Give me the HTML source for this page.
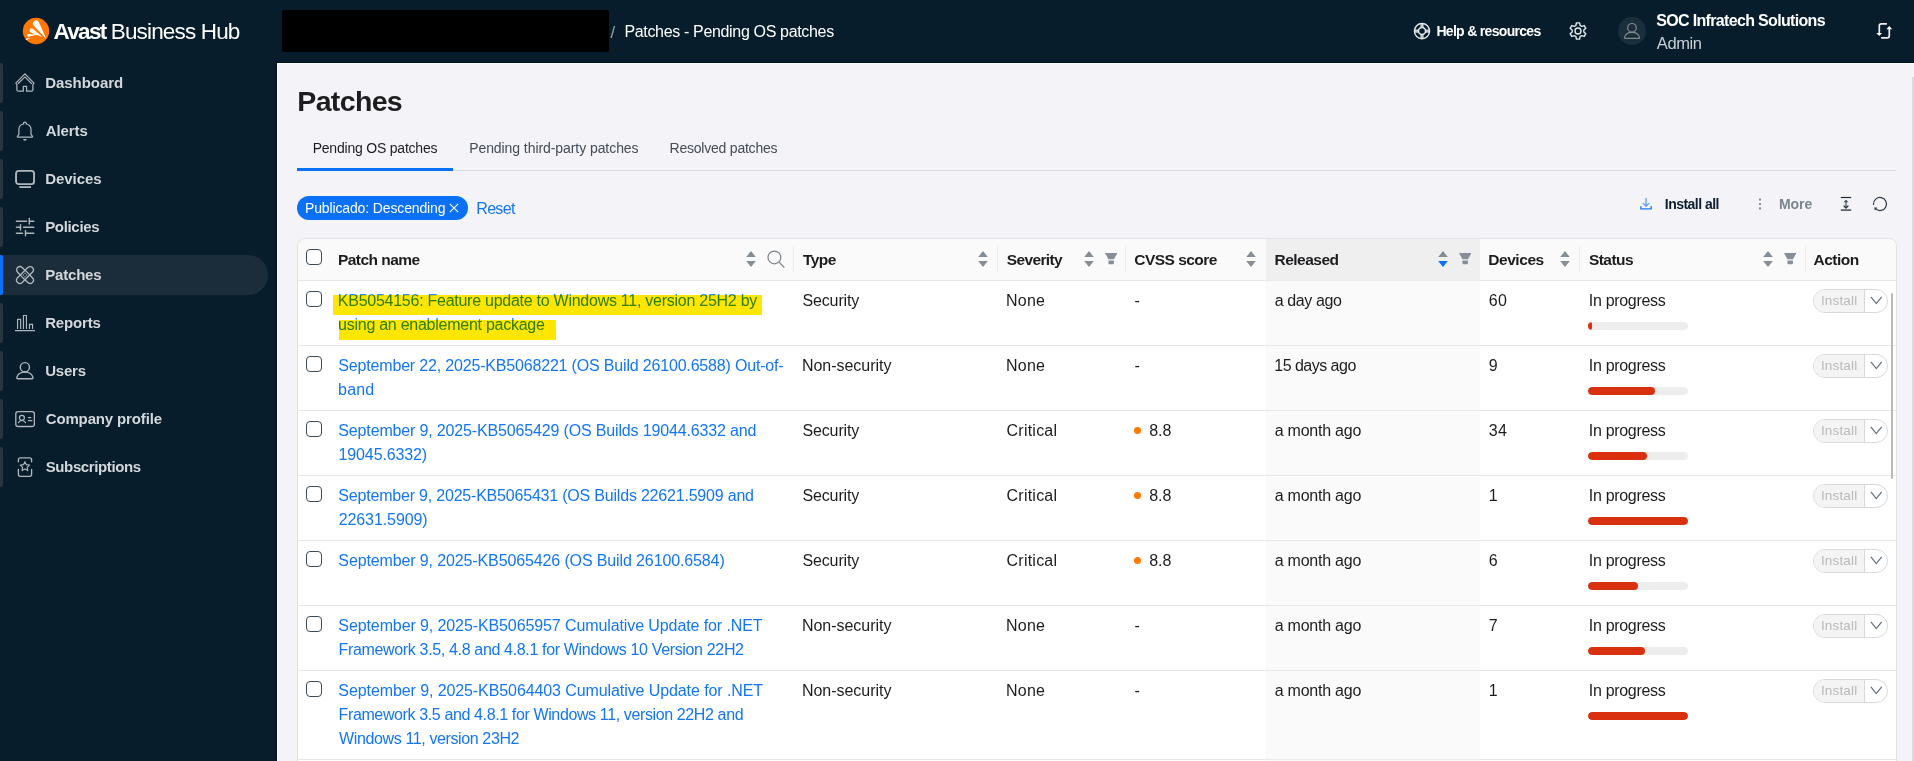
<!DOCTYPE html>
<html>
<head>
<meta charset="utf-8">
<title>Patches - Pending OS patches</title>
<style>
*{box-sizing:border-box;margin:0;padding:0}
html,body{width:1914px;height:761px;overflow:hidden;background:#f4f3f8;font-family:"Liberation Sans",sans-serif;color:#1d1d1f}
body{position:relative}
.a{position:absolute;white-space:nowrap}
#top{position:absolute;left:0;top:0;width:1914px;height:63px;background:#071d2b}
#side{position:absolute;left:0;top:63px;width:277px;height:698px;background:#071d2b}
.nav{position:absolute;left:0;width:277px;height:40px}
.nav .bar{position:absolute;left:0;top:0;width:3px;height:40px;background:#26363f;border-radius:0 2px 2px 0}
.nav .lbl{position:absolute;left:45.500px;top:11.100px;line-height:18px;color:#d3d7db;white-space:nowrap}
.nav svg{position:absolute;left:15px;top:10px;width:20px;height:20px;fill:none;stroke:#aeb6bc;stroke-width:1.300;stroke-linecap:round;stroke-linejoin:round}
.nav.act .pill{position:absolute;left:0;top:0;width:268px;height:40px;background:#1b2d3a;border-radius:0 20px 20px 0}
.nav.act .bar{background:#0a72f8}
#tbl{position:absolute;left:297px;top:238px;width:1600px;height:540px;background:#fff;border:1px solid #e1e1e7;border-radius:8px 8px 0 0;overflow:hidden}
#thead{position:absolute;left:0;top:0;width:1598px;height:42px;background:#fafafa;border-bottom:1px solid #e8e8ec}
#relcol{position:absolute;left:968px;top:0;width:214px;height:540px;background:#fafafa}
#relhead{position:absolute;left:968px;top:0;width:214px;height:41px;background:#efeff0}
.th{position:absolute;top:12px;line-height:18px;color:#1d1d1f;white-space:nowrap}
.sep{position:absolute;top:7px;width:1px;height:27px;background:#ececf0}
.row{position:absolute;left:0;width:1598px;border-bottom:1px solid #e8e8ec}
.cb{position:absolute;left:8px;width:16px;height:16px;border:1.500px solid #3c4b57;border-radius:4px;background:#fff}
.c{position:absolute;top:7.700px;line-height:24px;color:#1d1d1f;white-space:nowrap}
.nm{position:absolute;left:40.600px;line-height:24px;color:#1476f6;white-space:nowrap}
.dot{position:absolute;left:836px;top:15.500px;width:7.400px;height:7.400px;border-radius:4px;background:#ff7a00}
.trk{position:absolute;left:1290px;top:41px;width:100px;height:8px;border-radius:4px;background:#ededee;overflow:hidden}
.trk i{display:block;height:8px;border-radius:4px;background:#d9310f}
.btn{position:absolute;left:1515.200px;top:8.300px;width:74.600px;height:23.400px;border:1px solid #d6d9dc;border-radius:12px;background:#fff;overflow:hidden}
.btn .l{position:absolute;left:0;top:0;width:50.800px;height:22px;background:#f4f4f4;border-right:1px solid #d6d9dc}
.btn .t{position:absolute;left:7.300px;top:-0.500px;line-height:21px;color:#b9b9bc;white-space:nowrap}
.btn svg{position:absolute;left:55.600px;top:5.900px;width:12.600px;height:9px;fill:none;stroke:#66737f;stroke-width:1.250}
.hl{position:absolute;background:#ffe600;mix-blend-mode:multiply}
</style>
</head>
<body>
<div id="top"></div><div id="side"></div>
<div class="a" style="left:276px;top:62px;width:1638px;height:700px;border-left:1px solid #03121d;border-top:1px solid #03121d"></div>
<div class="a" style="left:277px;top:63px;width:1637px;height:700px;border-left:1px solid #fcfcfe;border-top:1px solid #fcfcfe"></div>
<svg class="a" style="left:22px;top:17px" width="28" height="28" viewBox="0 0 28 28"><circle cx="14" cy="14" r="13.2" fill="#ff7800"/><path fill="#fff" d="M24.4 21.9L16.77 4.97A3.1 3.1 0 1 0 11.63 8.43ZM20.5 19.9L10.92 11.7A2.2 2.2 0 1 0 8.68 15.5ZM15.5 17.6L6.49 16.95A1.35 1.35 0 1 0 6.71 19.65ZM8.4 20.7L4.14 21.65A0.7 0.7 0 1 0 4.66 22.95Z"/></svg>
<div class="a" style="left:53.500px;top:18.900px;line-height:26px;color:#fff;font-size:22.5px;font-weight:700;letter-spacing:-1.688px;left:53.50px">Avast</div>
<div class="a" style="left:112px;top:18.900px;line-height:26px;color:#fff;font-size:22.5px;font-weight:400;letter-spacing:-0.841px;left:110.75px">Business Hub</div>
<div class="a" style="left:282px;top:10px;width:327px;height:41.700px;background:#000;border-radius:2px"></div>
<div class="a" style="left:610.500px;top:22px;font-size:16.500px;line-height:20px;color:#9aa5ad">/</div>
<div class="a" style="left:625.200px;top:22px;line-height:20px;color:#fff;font-size:16px;font-weight:400;letter-spacing:-0.337px;left:624.45px">Patches - Pending OS patches</div>
<svg class="a" style="left:1413px;top:22px" width="18" height="18" viewBox="0 0 18 18" fill="none">
<path d="M9 1.900V5.400M9 12.800V16.300M1.900 9.100H5.400M12.600 9.100H16.100" stroke="#c3c9cd" stroke-width="3.200"/>
<circle cx="9" cy="9.100" r="7.600" stroke="#e4e7e9" stroke-width="1.400"/><circle cx="9" cy="9.100" r="3.500" stroke="#e4e7e9" stroke-width="1.500"/></svg>
<div class="a" style="left:1436.900px;top:21.700px;line-height:18px;color:#fff;font-size:14px;font-weight:700;letter-spacing:-0.687px;left:1436.40px">Help &amp; resources</div>
<svg class="a" style="left:1568px;top:21px" width="20" height="20" viewBox="0 0 20 20" fill="none" stroke="#e6e9eb" stroke-width="1.400" stroke-linejoin="round">
<path d="M7.89 4.49L8.42 1.85L11.58 1.85L12.11 4.49L13.71 5.41L16.26 4.55L17.85 7.3L15.83 9.08L15.83 10.92L17.85 12.7L16.26 15.45L13.71 14.59L12.11 15.51L11.58 18.15L8.42 18.15L7.89 15.51L6.29 14.59L3.74 15.45L2.15 12.7L4.17 10.92L4.17 9.08L2.15 7.3L3.74 4.55L6.29 5.41Z"/><circle cx="10" cy="10" r="3"/></svg>
<div class="a" style="left:1618px;top:17px;width:28px;height:28px;border-radius:14px;background:#1b2e3b"></div>
<svg class="a" style="left:1622px;top:21px" width="20" height="20" viewBox="0 0 20 20" fill="none" stroke="#7e8990" stroke-width="1.200">
<circle cx="10" cy="6.800" r="4.300"/><path d="M3.300 17.400H16.700a.8.800 0 0 0 .8-1C16.800 13.300 14 11.300 10 11.300S3.200 13.300 2.500 16.400a.8.800 0 0 0 .8 1z"/></svg>
<div class="a" style="left:1656.300px;top:10.800px;line-height:20px;color:#fff;font-size:16px;font-weight:700;letter-spacing:-0.67px;left:1656.30px">SOC Infratech Solutions</div>
<div class="a" style="left:1656.300px;top:33px;line-height:20px;color:#c9cfd4;font-size:16.5px;font-weight:400;letter-spacing:-0.387px;left:1656.80px">Admin</div>
<svg class="a" style="left:1874px;top:21px" width="20" height="20" viewBox="0 0 20 20" fill="none" stroke="#eceeef" stroke-width="1.700">
<path d="M12.900 2.900H7.300a2 2 0 0 0-2 2V12.300"/><path d="M7.100 16.800H13.300a2 2 0 0 0 2-2V8"/>
<path d="M2.300 12H8.100L5.200 14.900zM12.400 8.300H18.200L15.300 5z" fill="#fff" stroke="none"/></svg>
<div class="nav" style="top:63px"><div class="bar"></div><svg viewBox="0 0 20 20"><path d="M1.9 16.700V11.400L0.800 10.100 9.900 0.900 19 10.100 17.900 11.400V16.700a1.500 1.500 0 0 1-1.500 1.500H11.600V13.300H8.300V18.200H3.400a1.500 1.500 0 0 1-1.500-1.500z" stroke-width="1.250"/><path d="M3.300 10.500 9.900 3.900 16.500 10.500" stroke-width="1.100"/></svg><div class="lbl" style="font-size:15px;font-weight:700;letter-spacing:-0.031px;left:45.20px">Dashboard</div></div>
<div class="nav" style="top:111px"><div class="bar"></div><svg viewBox="0 0 20 20"><path d="M3.900 13.300V8.700C3.900 5.300 6.200 3.400 8.600 3a1.400 1.400 0 1 1 2.600 0C13.600 3.400 16 5.300 16 8.700v4.600l1.500 2a.5.500 0 0 1-.4.800H2.800a.5.500 0 0 1-.4-.8z" stroke-width="1.250"/><path d="M8.100 18h3.600a1.800 1.800 0 0 1-3.600 0z" fill="#aeb6bc" stroke="none"/></svg><div class="lbl" style="font-size:15px;font-weight:700;letter-spacing:-0.08px;left:45.70px">Alerts</div></div>
<div class="nav" style="top:159px"><div class="bar"></div><svg viewBox="0 0 20 20"><rect x="1.050" y="1.900" width="18" height="13.200" rx="2.600" stroke-width="1.900"/><path d="M4.300 18.100h11.700" stroke-width="1.800" stroke-linecap="butt"/></svg><div class="lbl" style="font-size:15px;font-weight:700;letter-spacing:-0.05px;left:45.20px">Devices</div></div>
<div class="nav" style="top:207px"><div class="bar"></div><svg viewBox="0 0 20 20"><path d="M1.400 4.300H11.500M14.300 1.400V6.900M14.300 4.300H18.800M1.400 10.300H5.400M5.500 7.600V12.900M8.500 10.300H18.800M1.400 16.200H7.500M10.500 13.500V18.800M10.500 16.200H18.800" stroke-width="1.450"/></svg><div class="lbl" style="font-size:15px;font-weight:700;letter-spacing:-0.329px;left:45.20px">Policies</div></div>
<div class="nav act" style="top:255px"><div class="pill"></div><div class="bar"></div><svg viewBox="0 0 20 20"><g transform="rotate(-45 10 10)"><rect x="6.750" y="-0.500" width="6.500" height="21" rx="3.250" stroke-width="1.350"/></g><g transform="rotate(45 10 10)"><rect x="6.750" y="-0.500" width="6.500" height="21" rx="3.250" fill="#1b2d3a" stroke-width="1.350"/><path d="M6.750 6.500h6.500M6.750 13.500h6.500" stroke-width="1.250"/><path d="M8.800 8.700v.1M11.200 8.700v.1M8.800 11.200v.1M11.200 11.200v.1" stroke-width="1.300"/></g></svg><div class="lbl" style="font-size:15px;font-weight:700;letter-spacing:-0.183px;left:45.20px">Patches</div></div>
<div class="nav" style="top:303px"><div class="bar"></div><svg viewBox="0 0 20 20"><path d="M0.300 17.600H19.700" stroke-width="1.400"/><path d="M2.550 15.900V6.300H5.600V15.900M8.450 15.900V2.500H11.450V15.900M14.450 15.900V11.400H17.550V15.900" stroke-width="1.150" stroke-linecap="butt" stroke-linejoin="miter"/></svg><div class="lbl" style="font-size:15px;font-weight:700;letter-spacing:-0.15px;left:45.20px">Reports</div></div>
<div class="nav" style="top:351px"><div class="bar"></div><svg viewBox="0 0 20 20"><circle cx="9.900" cy="6.200" r="4.600" stroke-width="1.400"/><path d="M2.700 17.700H17.100a.9.900 0 0 0 .9-1.100C17.200 13 14.200 11.100 9.900 11.100S2.600 13 1.800 16.600a.9.900 0 0 0 .9 1.100z" stroke-width="1.400"/></svg><div class="lbl" style="font-size:15px;font-weight:700;letter-spacing:-0.225px;left:45.20px">Users</div></div>
<div class="nav" style="top:399px"><div class="bar"></div><svg viewBox="0 0 20 20"><rect x="0.800" y="2.600" width="18.600" height="14.900" rx="2.300" stroke-width="1.350"/><circle cx="6.900" cy="8.800" r="2.500" stroke-width="1.250"/><path d="M3.400 13.700C4.200 12.200 5.400 11.400 6.900 11.400S9.700 12.200 10.600 13.700M13.400 8.500H15.800M13.400 11.500H16.900" stroke-width="1.250"/></svg><div class="lbl" style="font-size:15px;font-weight:700;letter-spacing:-0.139px;left:45.70px">Company profile</div></div>
<div class="nav" style="top:447px"><div class="bar"></div><svg viewBox="0 0 20 20"><path d="M3.400 4.700V2.900A2 2 0 0 1 5.400 0.900H14.600A2 2 0 0 1 16.600 2.900V4.700M3.400 12.300V17.300A2 2 0 0 0 5.400 19.300H14.600A2 2 0 0 0 16.600 17.300V12.300" stroke-width="1.350"/><path d="M9.9 4.7L11.31 7.66L14.56 8.09L12.18 10.34L12.78 13.56L9.9 12L7.02 13.56L7.62 10.34L5.24 8.09L8.49 7.66Z" stroke-width="1.150"/></svg><div class="lbl" style="font-size:15px;font-weight:700;letter-spacing:-0.375px;left:45.70px">Subscriptions</div></div>
<div class="a" style="left:297.300px;top:84.300px;line-height:34px;color:#1d1d1f;font-size:28.5px;font-weight:700;letter-spacing:-0.65px;left:297.30px">Patches</div>
<div class="a" style="left:313.4px;top:139px;line-height:18px;color:#1d1d1f;font-size:14px;font-weight:400;letter-spacing:-0.209px;left:312.65px">Pending OS patches</div>
<div class="a" style="left:469.9px;top:139px;line-height:18px;color:#444c55;font-size:14px;font-weight:400;letter-spacing:-0.069px;left:469.15px">Pending third-party patches</div>
<div class="a" style="left:670.3px;top:139px;line-height:18px;color:#444c55;font-size:14px;font-weight:400;letter-spacing:-0.22px;left:669.55px">Resolved patches</div>
<div class="a" style="left:297px;top:170px;width:1599px;height:1px;background:#dcdce3"></div>
<div class="a" style="left:297px;top:168px;width:156px;height:3px;background:#0a70f6"></div>
<div class="a" style="left:297px;top:196px;width:171px;height:24px;border-radius:12px;background:#0a70f6"></div>
<div class="a" style="left:305.700px;top:199px;line-height:18px;color:#fff;font-size:14px;font-weight:400;letter-spacing:-0.13px;left:304.95px">Publicado: Descending</div>
<svg class="a" style="left:449px;top:203px" width="10" height="10" viewBox="0 0 10 10" fill="none" stroke="#fff" stroke-width="1.100"><path d="M0.800 0.800l8.400 8.400M9.200 0.800l-8.400 8.400"/></svg>
<div class="a" style="left:477px;top:198.700px;line-height:20px;color:#1476f6;font-size:16px;font-weight:400;letter-spacing:-0.675px;left:476.25px">Reset</div>
<svg class="a" style="left:1639px;top:197px" width="14" height="14" viewBox="0 0 14 14" fill="none" stroke-linecap="round" stroke-linejoin="round"><path d="M7 1.400V9M4.200 6.400 7 9.200 9.800 6.400" stroke="#5c9df7" stroke-width="1.300"/><path d="M1.900 9.600V11.900H12.200V9.600" stroke="#1a7bf8" stroke-width="1.400"/></svg>
<div class="a" style="left:1665.300px;top:194.700px;line-height:18px;color:#0d1f2e;font-size:14px;font-weight:700;letter-spacing:-0.53px;left:1664.80px">Install all</div>
<svg class="a" style="left:1757.600px;top:198.300px" width="4" height="12" viewBox="0 0 4 12" fill="#6f7b85"><circle cx="2" cy="1.600" r="1.050"/><circle cx="2" cy="6" r="1.050"/><circle cx="2" cy="10.400" r="1.050"/></svg>
<div class="a" style="left:1779.400px;top:194.700px;line-height:18px;color:#7a858f;font-size:14px;font-weight:700;letter-spacing:-0.033px;left:1778.90px">More</div>
<svg class="a" style="left:1839px;top:196px" width="14" height="16" viewBox="0 0 14 16" fill="none" stroke="#1a2d3d" stroke-linecap="butt" stroke-linejoin="round"><path d="M1.800 1.500H12.200" stroke-width="1.200"/><path d="M1.800 14.100H12.200" stroke-width="1.500" stroke="#3b4a57"/><path d="M7 4.200V11.600" stroke-width="1.300" stroke="#4a5966"/><path d="M4.400 6.300 7 3.700 9.600 6.300z" fill="#4a5966" stroke="none"/><path d="M4.600 9.600 7 12 9.400 9.600" stroke-width="1.300"/></svg>
<svg class="a" style="left:1872px;top:196px" width="16" height="16" viewBox="0 0 16 16" fill="none" stroke="#2c3a45" stroke-width="1.250" stroke-linecap="round"><path d="M1.500 8.400A6.500 6.500 0 1 1 3.700 12.900"/><path d="M2.300 11.200 5.300 11.700 2.700 14.400z" fill="#2c3a45" stroke="none"/></svg>
<div id="tbl"><div id="relcol"></div><div id="thead"></div><div id="relhead"></div>
<div class="cb" style="top:10px"></div>
<div class="th" style="left:40.5px;font-size:15.5px;font-weight:700;letter-spacing:-0.544px;left:40.00px">Patch name</div>
<div class="th" style="left:504.7px;font-size:15.5px;font-weight:700;letter-spacing:-0.517px;left:504.95px">Type</div>
<div class="th" style="left:708.8px;font-size:15.5px;font-weight:700;letter-spacing:-0.636px;left:708.80px">Severity</div>
<div class="th" style="left:836.5px;font-size:15.5px;font-weight:700;letter-spacing:-0.522px;left:836.25px">CVSS score</div>
<div class="th" style="left:977.0px;font-size:15.5px;font-weight:700;letter-spacing:-0.514px;left:976.50px">Released</div>
<div class="th" style="left:1190.7px;font-size:15.5px;font-weight:700;letter-spacing:-0.433px;left:1190.20px">Devices</div>
<div class="th" style="left:1291.0px;font-size:15.5px;font-weight:700;letter-spacing:-0.57px;left:1291.00px">Status</div>
<div class="th" style="left:1515.5px;font-size:15.5px;font-weight:700;letter-spacing:-0.49px;left:1515.50px">Action</div>
<div class="sep" style="left:495px"></div>
<div class="sep" style="left:699px"></div>
<div class="sep" style="left:827px"></div>
<div class="sep" style="left:1281px"></div>
<div class="sep" style="left:1506.5px"></div>
<svg class="a" style="left:448px;top:11.700px" width="10" height="16" viewBox="0 0 10 16"><path d="M5 0 9.800 6H0.200z" fill="#858e96"/><path d="M5 16 9.800 10H0.200z" fill="#858e96"/></svg><svg class="a" style="left:680px;top:11.700px" width="10" height="16" viewBox="0 0 10 16"><path d="M5 0 9.800 6H0.200z" fill="#858e96"/><path d="M5 16 9.800 10H0.200z" fill="#858e96"/></svg><svg class="a" style="left:786px;top:11.700px" width="10" height="16" viewBox="0 0 10 16"><path d="M5 0 9.800 6H0.200z" fill="#858e96"/><path d="M5 16 9.800 10H0.200z" fill="#858e96"/></svg><svg class="a" style="left:807.3px;top:14.400px" width="12.400" height="11.200" viewBox="0 0 12.400 11.200" fill="#868f97"><path d="M0 0h12.400L8.950 6.300H3.450z"/><path d="M3.450 7.600h5.500v2.600a1 1 0 0 1-1 1h-3.500a1 1 0 0 1-1-1z"/></svg><svg class="a" style="left:948px;top:11.700px" width="10" height="16" viewBox="0 0 10 16"><path d="M5 0 9.800 6H0.200z" fill="#858e96"/><path d="M5 16 9.800 10H0.200z" fill="#858e96"/></svg><svg class="a" style="left:1140px;top:11.700px" width="10" height="16" viewBox="0 0 10 16"><path d="M5 0 9.800 6H0.200z" fill="#858e96"/><path d="M5 16 9.800 10H0.200z" fill="#0a70f6"/></svg><svg class="a" style="left:1160.8px;top:14.400px" width="12.400" height="11.200" viewBox="0 0 12.400 11.200" fill="#868f97"><path d="M0 0h12.400L8.950 6.300H3.450z"/><path d="M3.450 7.600h5.500v2.600a1 1 0 0 1-1 1h-3.500a1 1 0 0 1-1-1z"/></svg><svg class="a" style="left:1262px;top:11.700px" width="10" height="16" viewBox="0 0 10 16"><path d="M5 0 9.800 6H0.200z" fill="#858e96"/><path d="M5 16 9.800 10H0.200z" fill="#858e96"/></svg><svg class="a" style="left:1465px;top:11.700px" width="10" height="16" viewBox="0 0 10 16"><path d="M5 0 9.800 6H0.200z" fill="#858e96"/><path d="M5 16 9.800 10H0.200z" fill="#858e96"/></svg><svg class="a" style="left:1485.8px;top:14.400px" width="12.400" height="11.200" viewBox="0 0 12.400 11.200" fill="#868f97"><path d="M0 0h12.400L8.950 6.300H3.450z"/><path d="M3.450 7.600h5.500v2.600a1 1 0 0 1-1 1h-3.500a1 1 0 0 1-1-1z"/></svg>
<svg class="a" style="left:467px;top:10px" width="20" height="20" viewBox="0 0 20 20" fill="none" stroke="#7c868e" stroke-width="1.250" stroke-linecap="round"><circle cx="9.400" cy="8.400" r="6.400"/><path d="M14.100 13.100 19 18.200"/></svg>
<div class="row" style="top:42px;height:65px">
<div class="cb" style="top:10px"></div>
<div class="nm" style="top:7.7px;font-size:16px;font-weight:400;letter-spacing:-0.26px;left:39.85px;color:#2f8cff">KB5054156: Feature update to Windows 11, version 25H2 by</div>
<div class="nm" style="top:31.7px;font-size:16px;font-weight:400;letter-spacing:-0.26px;left:40.10px;color:#2f8cff">using an enablement package</div>
<div class="hl" style="left:35px;top:14.300px;width:429.200px;height:19.700px"></div><div class="hl" style="left:40.600px;top:39px;width:217.400px;height:19.500px"></div>
<div class="c" style="left:504.7px;font-size:16px;font-weight:400;letter-spacing:-0.129px;left:504.45px">Security</div>
<div class="c" style="left:707.8px;font-size:16px;font-weight:400;letter-spacing:0.217px;left:708.05px">None</div>
<div class="c" style="left:836.500px;font-size:16px">-</div>
<div class="c" style="left:977px;font-size:16px;font-weight:400;letter-spacing:-0.381px;left:976.75px">a day ago</div>
<div class="c" style="left:1190.700px;font-size:16px;letter-spacing:0.300px">60</div>
<div class="c" style="left:1291px;font-size:16px;font-weight:400;letter-spacing:-0.31px;left:1290.80px">In progress</div>
<div class="trk"><i style="width:4.2px"></i></div>
<div class="btn"><div class="l"></div><div class="t" style="font-size:13.5px;font-weight:400;letter-spacing:0.167px;left:6.75px">Install</div><svg viewBox="0 0 12.600 9"><path d="M0.900 0.800 6.300 7.600 11.700 0.800"/></svg></div>
</div>
<div class="row" style="top:107px;height:65px">
<div class="cb" style="top:10px"></div>
<div class="nm" style="top:7.7px;font-size:16px;font-weight:400;letter-spacing:-0.177px;left:40.35px">September 22, 2025-KB5068221 (OS Build 26100.6588) Out-of-</div>
<div class="nm" style="top:31.7px;font-size:16px;font-weight:400;letter-spacing:0.133px;left:40.10px">band</div>
<div class="c" style="left:503.7px;font-size:16px;font-weight:400;letter-spacing:-0.027px;left:503.95px">Non-security</div>
<div class="c" style="left:707.8px;font-size:16px;font-weight:400;letter-spacing:0.217px;left:708.05px">None</div>
<div class="c" style="left:836.500px;font-size:16px">-</div>
<div class="c" style="left:977px;font-size:16px;font-weight:400;letter-spacing:-0.515px;left:976.25px">15 days ago</div>
<div class="c" style="left:1190.700px;font-size:16px;letter-spacing:0.300px">9</div>
<div class="c" style="left:1291px;font-size:16px;font-weight:400;letter-spacing:-0.31px;left:1290.80px">In progress</div>
<div class="trk"><i style="width:67px"></i></div>
<div class="btn"><div class="l"></div><div class="t" style="font-size:13.5px;font-weight:400;letter-spacing:0.167px;left:6.75px">Install</div><svg viewBox="0 0 12.600 9"><path d="M0.900 0.800 6.300 7.600 11.700 0.800"/></svg></div>
</div>
<div class="row" style="top:172px;height:65px">
<div class="cb" style="top:10px"></div>
<div class="nm" style="top:7.7px;font-size:16px;font-weight:400;letter-spacing:-0.155px;left:40.35px">September 9, 2025-KB5065429 (OS Builds 19044.6332 and</div>
<div class="nm" style="top:31.7px;font-size:16px;font-weight:400;letter-spacing:-0.125px;left:40.55px">19045.6332)</div>
<div class="c" style="left:504.7px;font-size:16px;font-weight:400;letter-spacing:-0.129px;left:504.45px">Security</div>
<div class="c" style="left:708.8px;font-size:16px;font-weight:400;letter-spacing:0.229px;left:708.55px">Critical</div>
<i class="dot"></i><div class="c" style="left:851.600px;font-size:16px;font-weight:400;letter-spacing:-0.125px;left:851.35px">8.8</div>
<div class="c" style="left:977px;font-size:16px;font-weight:400;letter-spacing:-0.24px;left:976.75px">a month ago</div>
<div class="c" style="left:1190.700px;font-size:16px;letter-spacing:0.300px">34</div>
<div class="c" style="left:1291px;font-size:16px;font-weight:400;letter-spacing:-0.31px;left:1290.80px">In progress</div>
<div class="trk"><i style="width:59px"></i></div>
<div class="btn"><div class="l"></div><div class="t" style="font-size:13.5px;font-weight:400;letter-spacing:0.167px;left:6.75px">Install</div><svg viewBox="0 0 12.600 9"><path d="M0.900 0.800 6.300 7.600 11.700 0.800"/></svg></div>
</div>
<div class="row" style="top:237px;height:65px">
<div class="cb" style="top:10px"></div>
<div class="nm" style="top:7.7px;font-size:16px;font-weight:400;letter-spacing:-0.201px;left:40.35px">September 9, 2025-KB5065431 (OS Builds 22621.5909 and</div>
<div class="nm" style="top:31.7px;font-size:16px;font-weight:400;letter-spacing:-0.085px;left:40.65px">22631.5909)</div>
<div class="c" style="left:504.7px;font-size:16px;font-weight:400;letter-spacing:-0.129px;left:504.45px">Security</div>
<div class="c" style="left:708.8px;font-size:16px;font-weight:400;letter-spacing:0.229px;left:708.55px">Critical</div>
<i class="dot"></i><div class="c" style="left:851.600px;font-size:16px;font-weight:400;letter-spacing:-0.125px;left:851.35px">8.8</div>
<div class="c" style="left:977px;font-size:16px;font-weight:400;letter-spacing:-0.24px;left:976.75px">a month ago</div>
<div class="c" style="left:1190.700px;font-size:16px;letter-spacing:0.300px">1</div>
<div class="c" style="left:1291px;font-size:16px;font-weight:400;letter-spacing:-0.31px;left:1290.80px">In progress</div>
<div class="trk"><i style="width:100px"></i></div>
<div class="btn"><div class="l"></div><div class="t" style="font-size:13.5px;font-weight:400;letter-spacing:0.167px;left:6.75px">Install</div><svg viewBox="0 0 12.600 9"><path d="M0.900 0.800 6.300 7.600 11.700 0.800"/></svg></div>
</div>
<div class="row" style="top:302px;height:65px">
<div class="cb" style="top:10px"></div>
<div class="nm" style="top:7.7px;font-size:16px;font-weight:400;letter-spacing:-0.123px;left:40.35px">September 9, 2025-KB5065426 (OS Build 26100.6584)</div>
<div class="c" style="left:504.7px;font-size:16px;font-weight:400;letter-spacing:-0.129px;left:504.45px">Security</div>
<div class="c" style="left:708.8px;font-size:16px;font-weight:400;letter-spacing:0.229px;left:708.55px">Critical</div>
<i class="dot"></i><div class="c" style="left:851.600px;font-size:16px;font-weight:400;letter-spacing:-0.125px;left:851.35px">8.8</div>
<div class="c" style="left:977px;font-size:16px;font-weight:400;letter-spacing:-0.24px;left:976.75px">a month ago</div>
<div class="c" style="left:1190.700px;font-size:16px;letter-spacing:0.300px">6</div>
<div class="c" style="left:1291px;font-size:16px;font-weight:400;letter-spacing:-0.31px;left:1290.80px">In progress</div>
<div class="trk"><i style="width:50px"></i></div>
<div class="btn"><div class="l"></div><div class="t" style="font-size:13.5px;font-weight:400;letter-spacing:0.167px;left:6.75px">Install</div><svg viewBox="0 0 12.600 9"><path d="M0.900 0.800 6.300 7.600 11.700 0.800"/></svg></div>
</div>
<div class="row" style="top:367px;height:65px">
<div class="cb" style="top:10px"></div>
<div class="nm" style="top:7.7px;font-size:16px;font-weight:400;letter-spacing:-0.102px;left:40.35px">September 9, 2025-KB5065957 Cumulative Update for .NET</div>
<div class="nm" style="top:31.7px;font-size:16px;font-weight:400;letter-spacing:-0.341px;left:40.55px">Framework 3.5, 4.8 and 4.8.1 for Windows 10 Version 22H2</div>
<div class="c" style="left:503.7px;font-size:16px;font-weight:400;letter-spacing:-0.027px;left:503.95px">Non-security</div>
<div class="c" style="left:707.8px;font-size:16px;font-weight:400;letter-spacing:0.217px;left:708.05px">None</div>
<div class="c" style="left:836.500px;font-size:16px">-</div>
<div class="c" style="left:977px;font-size:16px;font-weight:400;letter-spacing:-0.24px;left:976.75px">a month ago</div>
<div class="c" style="left:1190.700px;font-size:16px;letter-spacing:0.300px">7</div>
<div class="c" style="left:1291px;font-size:16px;font-weight:400;letter-spacing:-0.31px;left:1290.80px">In progress</div>
<div class="trk"><i style="width:57px"></i></div>
<div class="btn"><div class="l"></div><div class="t" style="font-size:13.5px;font-weight:400;letter-spacing:0.167px;left:6.75px">Install</div><svg viewBox="0 0 12.600 9"><path d="M0.900 0.800 6.300 7.600 11.700 0.800"/></svg></div>
</div>
<div class="row" style="top:432px;height:89px">
<div class="cb" style="top:10px"></div>
<div class="nm" style="top:7.7px;font-size:16px;font-weight:400;letter-spacing:-0.092px;left:40.35px">September 9, 2025-KB5064403 Cumulative Update for .NET</div>
<div class="nm" style="top:31.7px;font-size:16px;font-weight:400;letter-spacing:-0.376px;left:40.55px">Framework 3.5 and 4.8.1 for Windows 11, version 22H2 and</div>
<div class="nm" style="top:55.7px;font-size:16px;font-weight:400;letter-spacing:-0.38px;left:41.10px">Windows 11, version 23H2</div>
<div class="c" style="left:503.7px;font-size:16px;font-weight:400;letter-spacing:-0.027px;left:503.95px">Non-security</div>
<div class="c" style="left:707.8px;font-size:16px;font-weight:400;letter-spacing:0.217px;left:708.05px">None</div>
<div class="c" style="left:836.500px;font-size:16px">-</div>
<div class="c" style="left:977px;font-size:16px;font-weight:400;letter-spacing:-0.24px;left:976.75px">a month ago</div>
<div class="c" style="left:1190.700px;font-size:16px;letter-spacing:0.300px">1</div>
<div class="c" style="left:1291px;font-size:16px;font-weight:400;letter-spacing:-0.31px;left:1290.80px">In progress</div>
<div class="trk"><i style="width:100px"></i></div>
<div class="btn"><div class="l"></div><div class="t" style="font-size:13.5px;font-weight:400;letter-spacing:0.167px;left:6.75px">Install</div><svg viewBox="0 0 12.600 9"><path d="M0.900 0.800 6.300 7.600 11.700 0.800"/></svg></div>
</div>
<div class="row" style="top:521px;height:65px"></div>
</div>
<div class="a" style="left:1891px;top:293px;width:2px;height:186px;background:#b9b9bb;border-radius:1px"></div>
<div class="a" style="left:1912px;top:77px;width:2px;height:690px;background:#dadae0"></div>
</body>
</html>
